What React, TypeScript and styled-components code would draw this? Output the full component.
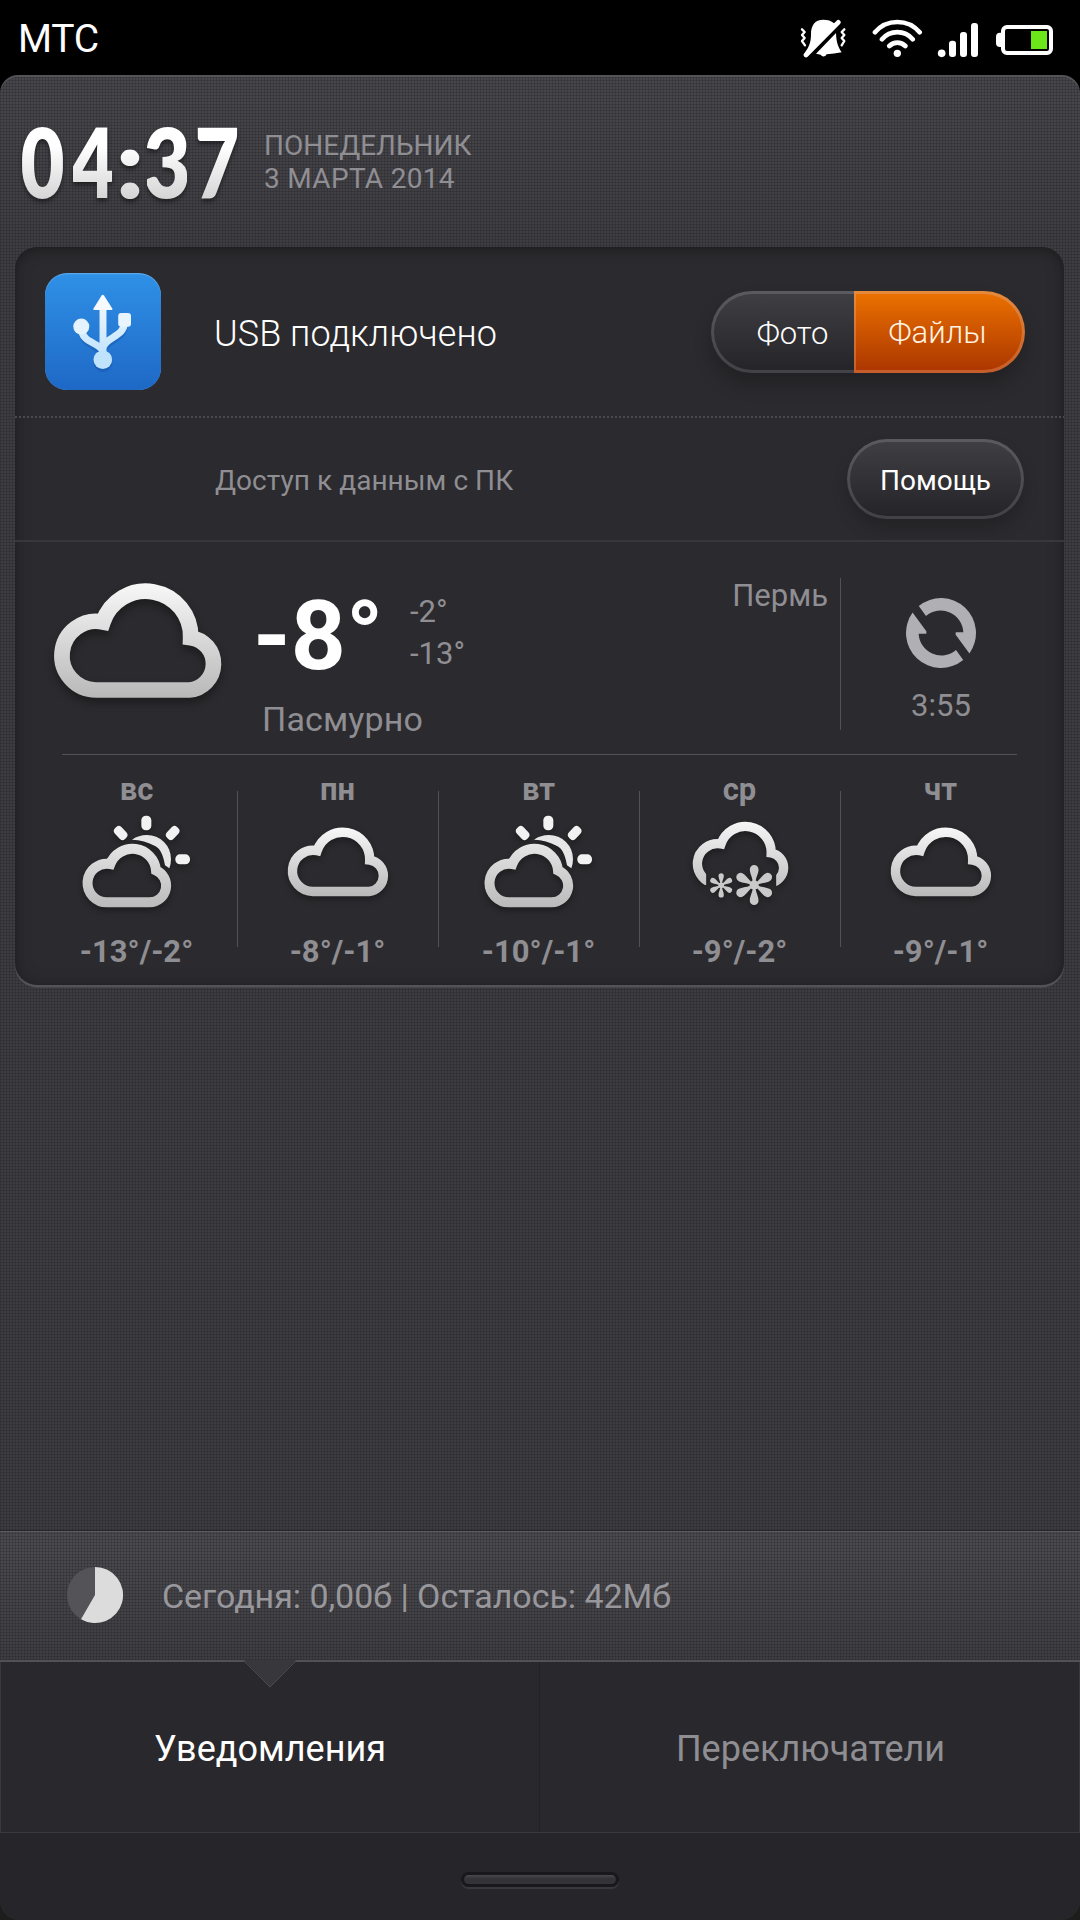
import React from "react";
import styled, { createGlobalStyle } from "styled-components";

const weave = `
  repeating-linear-gradient(0deg, rgba(18, 18, 22, 0.2) 0 1px, transparent 1px 3px),
  repeating-linear-gradient(90deg, rgba(18, 18, 22, 0.2) 0 1px, transparent 1px 3px)`;

const muted = "#8f8e93";

const GlobalStyle = createGlobalStyle`
  * { box-sizing: border-box; }
  body { margin: 0; background: #000; }
`;

const Screen = styled.div`
  width: 1080px;
  height: 1920px;
  display: flex;
  flex-direction: column;
  overflow: hidden;
  background: linear-gradient(#000 50%, #1d1d1b 50%);
  color: #fff;
  font-family: Roboto, "Noto Sans", sans-serif;
  white-space: nowrap;
`;

const StatusBar = styled.header`
  height: 75px;
  flex: none;
  display: flex;
  align-items: center;
  justify-content: space-between;
  padding: 1px 26px 0 18px;
`;

const Carrier = styled.span`
  padding-top: 2px;
  font-size: 39px;
  letter-spacing: -0.2px;
`;

const StatusIcons = styled.div`
  display: flex;
  align-items: center;
`;

const StatusIcon = styled.svg<{ $gap?: number }>`
  height: 40px;
  margin-left: ${(p) => p.$gap ?? 0}px;
  display: block;
`;

const Shade = styled.main`
  flex: 1;
  display: flex;
  flex-direction: column;
  border-radius: 18px 18px 20px 20px;
  overflow: hidden;
  background: ${weave}, linear-gradient(#47464b 0, #3e3d42 170px, #3d3c41 900px, #3d3c41);
  box-shadow: inset 0 2px 0 #545358;
`;

const DateHeader = styled.section`
  height: 172px;
  flex: none;
  display: flex;
  align-items: flex-start;
  padding-left: 17px;
`;

const Clock = styled.div`
  width: 228px;
  display: flex;
  margin-top: 37px;
  font-family: Lato, sans-serif;
  font-weight: 800;
  font-size: 96px;
  line-height: 97px;
  filter: drop-shadow(0 3px 2px rgba(0, 0, 0, 0.45));
`;

const ClockGlyph = styled.span<{ $w: number; $squeeze: number }>`
  width: ${(p) => p.$w}px;
  flex: none;
  display: flex;
  justify-content: center;
  transform: scaleX(${(p) => p.$squeeze});
  background: linear-gradient(#fff 35%, #d6d6d6 88%);
  background-clip: text;
  -webkit-background-clip: text;
  color: transparent;
`;

const DateText = styled.div`
  margin: 54px 0 0 19px;
  display: flex;
  flex-direction: column;
  font-size: 28px;
  line-height: 33px;
  color: ${muted};
`;

const FullDate = styled.span`
  letter-spacing: 0.32px;
`;

const Card = styled.section`
  margin: 0 16px 1px 15px;
  height: 738px;
  flex: none;
  display: flex;
  flex-direction: column;
  border-radius: 22px;
  background: #2b2a2e;
  box-shadow: 0 2.5px 0 #535257, inset 0 3px 10px rgba(0, 0, 0, 0.26), inset 0 0 20px rgba(0, 0, 0, 0.12);
`;

const UsbRow = styled.div`
  height: 169px;
  display: flex;
  align-items: center;
  padding: 0 39px 0 30px;
`;

const AppIcon = styled.svg`
  width: 116px;
  height: 117px;
  display: block;
`;

const UsbTitle = styled.div`
  flex: 1;
  padding: 4px 0 0 53px;
  font-size: 36px;
  font-weight: 300;
  letter-spacing: 0.06px;
`;

const DottedRule = styled.div`
  height: 2px;
  background: repeating-linear-gradient(90deg, #4b4a4f 0 2px, transparent 2px 4px);
`;

const SolidRule = styled.div`
  height: 2px;
  background: #38373b;
`;

const Segmented = styled.div`
  display: flex;
  border-radius: 41px;
  box-shadow: 0 12px 18px rgba(0, 0, 0, 0.22);
`;

const Pill = styled.button`
  font-family: inherit;
  color: #fff;
  height: 82px;
  padding: 0;
  border: 3px solid transparent;
  background: linear-gradient(#3f3e43, #252428) padding-box, linear-gradient(#5b5a5f, #424146) border-box;
`;

const PhotoSegment = styled(Pill)`
  width: 143px;
  padding: 3px 0 0 17px;
  border-right: 0;
  border-radius: 41px 0 0 41px;
  font-size: 31px;
  font-weight: 300;
`;

const FilesSegment = styled(Pill)`
  width: 171px;
  padding: 1px 3px 0 0;
  border-left-width: 2px;
  border-radius: 0 41px 41px 0;
  font-size: 31px;
  font-weight: 300;
  color: #fff3e2;
  background: linear-gradient(#ea7000, #ad3700) padding-box, linear-gradient(#e58a3c, #c55d2a) border-box;
`;

const HelpButton = styled(Pill)`
  width: 177px;
  height: 80px;
  padding-top: 3px;
  border-radius: 40px;
  font-size: 28px;
  box-shadow: 0 10px 16px rgba(0, 0, 0, 0.18);
`;

const AccessRow = styled.div`
  height: 122px;
  display: flex;
  align-items: center;
  justify-content: space-between;
  padding: 0 40px 0 200px;
  font-size: 28px;
  color: ${muted};
`;

const AccessLabel = styled.span`
  padding-top: 3px;
  letter-spacing: 0.05px;
`;

const Weather = styled.div`
  height: 212px;
  display: flex;
  align-items: flex-start;
  padding-left: 35px;
  color: ${muted};
`;

const CurrentIcon = styled.svg`
  width: 177px;
  height: 130px;
  margin-top: 37px;
  filter: drop-shadow(0 5px 4px rgba(0, 0, 0, 0.35));
`;

const Current = styled.div`
  width: 300px;
  padding: 46px 0 0 26px;
`;

const TempLine = styled.div`
  display: flex;
`;

const BigTemp = styled.div`
  width: 157px;
  font-size: 96px;
  line-height: 97px;
  font-weight: 700;
  color: #fff;
`;

const Range = styled.div`
  padding-top: 3px;
  font-size: 31px;
  line-height: 42px;
`;

const Condition = styled.div`
  margin-top: 14px;
  padding-left: 9px;
  font-size: 34px;
  line-height: 40px;
  letter-spacing: 0.15px;
`;

const City = styled.div`
  flex: 1;
  padding: 34px 12px 0 0;
  text-align: right;
  font-size: 31px;
  line-height: 40px;
`;

const Refresh = styled.div`
  width: 224px;
  height: 152px;
  margin-top: 36px;
  border-left: 1px solid #525156;
  display: flex;
  flex-direction: column;
  align-items: center;
  padding: 20px 23px 0 0;
  font-size: 31px;
  line-height: 36px;
`;

const RefreshIcon = styled.svg`
  width: 70px;
  height: 70px;
  flex: none;
  margin-bottom: 20px;
`;

const ThinRule = styled.div`
  height: 1px;
  margin: 0 47px;
  background: #525156;
`;

const Forecast = styled.div`
  display: flex;
  padding: 17px 0 0 22px;
`;

const Day = styled.div<{ $divided: boolean }>`
  width: 201px;
  height: 200px;
  flex: none;
  display: flex;
  flex-direction: column;
  align-items: center;
  padding-right: 2px;
  font-weight: 700;
  font-size: 31px;
  line-height: 36px;
  color: ${muted};
  background: ${(p) => (p.$divided ? "linear-gradient(#525156, #525156) right 19px / 1px 156px no-repeat" : "none")};
`;

const DayIcon = styled.svg`
  width: 140px;
  height: 115px;
  margin-bottom: 11px;
  flex: none;
  filter: drop-shadow(0 3px 3px rgba(0, 0, 0, 0.35));
`;

const Space = styled.div`
  flex: 1;
`;

const Traffic = styled.section`
  height: 131px;
  flex: none;
  display: flex;
  align-items: center;
  padding: 0 0 2px 66px;
  border-top: 1px solid #5a595e;
  border-bottom: 2px solid #525156;
  box-shadow: 0 -1px 0 #29282c;
  background: ${weave}, linear-gradient(#4b4a4f, #3e3d42);
  color: #98979b;
  font-size: 34px;
`;

const Pie = styled.svg`
  width: 58px;
  height: 58px;
  margin-right: 38px;
`;

const TrafficText = styled.span`
  padding-top: 2px;
  letter-spacing: -0.04px;
`;

const Tabs = styled.nav`
  height: 171px;
  flex: none;
  display: grid;
  grid-template-columns: 539px 1fr;
  border: 1px solid #39383c;
  border-top: 0;
  background: #29282c;
`;

const Tab = styled.button<{ $active?: boolean }>`
  position: relative;
  padding: 3px 0 0 ${(p) => (p.$active ? 0 : 2)}px;
  border: 0;
  border-right: ${(p) => (p.$active ? "1px solid #222125" : "0")};
  background: none;
  font-family: inherit;
  font-size: 36px;
  color: ${(p) => (p.$active ? "#fff" : muted)};
`;

const Pointer = styled.svg`
  position: absolute;
  top: -2px;
  left: 243px;
  width: 52px;
  height: 28px;
`;

const Bottom = styled.footer`
  height: 87px;
  flex: none;
  display: flex;
  justify-content: center;
  align-items: flex-start;
  padding-top: 39px;
  background: #26252a;
`;

const Handle = styled.div`
  width: 158px;
  height: 15px;
  border: 3px solid #19181c;
  border-radius: 8px;
  background: linear-gradient(#49484d, #343338 40%, #343338);
  box-shadow: 0 2px 0 #39383c;
`;

const Silver = ({ id, y1, y2 }: { id: string; y1: number; y2: number }) => (
  <linearGradient id={id} gradientUnits="userSpaceOnUse" x1="0" x2="0" y1={y1} y2={y2}>
    <stop offset="0" stopColor="#f8f8f8" />
    <stop offset="1" stopColor="#b8b8b9" />
  </linearGradient>
);

const CLOUD =
  "M287 451 A103 103 0 1 1 308 247 A135 135 0 0 1 571 294 A79 79 0 0 1 567 451 Z";

const PETAL = "M-3 0 C-3 -20 -14 -35 -13 -47 A13 13 0 0 1 13 -47 C14 -35 3 -20 3 0 Z";

const Flake = ({ x, y, scale }: { x: number; y: number; scale: number }) => (
  <g transform={`translate(${x} ${y}) scale(${scale})`} fill="#c9c9ca">
    {[0, 60, 120, 180, 240, 300].map((a) => (
      <path key={a} d={PETAL} transform={`rotate(${a})`} />
    ))}
    <circle r="14" />
  </g>
);

const CloudDay = () => (
  <DayIcon viewBox="803.5 171 420 345">
    <Silver id="cloudDay" y1={130} y2={475} />
    <g transform="translate(766 151) scale(0.6)">
      <path d={CLOUD} fill="none" stroke="url(#cloudDay)" strokeWidth="47" />
    </g>
  </DayIcon>
);

const SunCloudDay = () => (
  <DayIcon viewBox="200 172 420 345">
    <Silver id="sunDay" y1={195} y2={480} />
    <path
      d="M322 455 A58 58 0 1 1 330 340 A71 71 0 0 1 467 359 A50 50 0 0 1 448 455 Z"
      fill="none"
      stroke="url(#sunDay)"
      strokeWidth="30"
    />
    <path
      d="M395 267 Q415 253 440 253 A72 72 0 0 1 512 325 Q512 340 507 353 L494 344 Q485 294 464 286 Q432 268 395 267 Z"
      fill="#e6e6e6"
    />
    <g fill="#f2f2f2">
      <rect x="-15" y="-22" width="30" height="44" rx="14" transform="translate(438 217)" />
      <rect x="-14" y="-22" width="28" height="44" rx="12" transform="translate(361 247) rotate(-42)" />
      <rect x="-14" y="-22" width="28" height="44" rx="12" transform="translate(517 247) rotate(42)" />
      <rect x="-15" y="-22" width="30" height="44" rx="14" transform="translate(547 326) rotate(90)" />
    </g>
  </DayIcon>
);

const SnowDay = () => (
  <DayIcon viewBox="86.5 173 420 345">
    <Silver id="snowDay" y1={205} y2={450} />
    <clipPath id="snowClip">
      <path d="M100 180 H500 V409 H405 V350 H195 V404 H100 Z" />
    </clipPath>
    <path
      clipPath="url(#snowClip)"
      d="M227 400 A60 60 0 1 1 239.5 281 A77.3 77.3 0 0 1 390 308 A45 45 0 0 1 388 397"
      fill="none"
      stroke="url(#snowDay)"
      strokeWidth="28"
    />
    <Flake x={240} y={405} scale={0.61} />
    <Flake x={339} y={404} scale={1} />
  </DayIcon>
);

const days = [
  { name: "вс", icon: <SunCloudDay />, temps: "-13°/-2°" },
  { name: "пн", icon: <CloudDay />, temps: "-8°/-1°" },
  { name: "вт", icon: <SunCloudDay />, temps: "-10°/-1°" },
  { name: "ср", icon: <SnowDay />, temps: "-9°/-2°" },
  { name: "чт", icon: <CloudDay />, temps: "-9°/-1°" },
];

const clockGlyphs = [
  { ch: "0", w: 51, squeeze: 0.8 },
  { ch: "4", w: 49, squeeze: 0.8 },
  { ch: ":", w: 26, squeeze: 1.1 },
  { ch: "3", w: 48, squeeze: 0.85 },
  { ch: "7", w: 52, squeeze: 0.8 },
];

export default function App() {
  return (
    <Screen>
      <GlobalStyle />
      <StatusBar>
        <Carrier>МТС</Carrier>
        <StatusIcons>
          <StatusIcon viewBox="120 54 141 120" width="47">
            <path
              d="M190 59 C164 59 153 77 153 103 C153 128 147 142 133 160 A7 7 0 0 0 143 170 L240 72 A7 7 0 0 0 230 62 L222 70 C214 62 203 59 190 59 Z"
              fill="#fff"
            />
            <path d="M228 99 C229 128 235 142 245 157 Q222 162 200 163 A10 10 0 0 1 182 164 Q175 163 168 161 Z" fill="#fff" />
            <path
              d="M126 88 L134 96 L126 105 L134 114 L126 123 L135 136 M253 88 L245 96 L253 105 L245 114 L253 123 L245 136"
              fill="none"
              stroke="#fff"
              strokeWidth="7"
              strokeLinecap="round"
              strokeLinejoin="round"
            />
          </StatusIcon>
          <StatusIcon viewBox="336 54 153 120" width="51" $gap={25}>
            <circle cx="412" cy="160" r="11" fill="#fff" />
            <path
              d="M345 97 A88 88 0 0 1 479 97 M366 118 A60 60 0 0 1 458 118 M388 138 A34 34 0 0 1 436 138"
              fill="none"
              stroke="#fff"
              strokeWidth="14"
              strokeLinecap="round"
            />
          </StatusIcon>
          <StatusIcon viewBox="531 54 126 120" width="42" $gap={14}>
            <g fill="#fff">
              <circle cx="545" cy="160" r="11.5" />
              <rect x="567" y="122" width="21" height="49" rx="9" />
              <rect x="600" y="96" width="21" height="75" rx="9" />
              <rect x="633" y="69" width="21" height="102" rx="9" />
            </g>
          </StatusIcon>
          <StatusIcon viewBox="705 54 177 120" width="59" $gap={16}>
            <rect x="708" y="98" width="26" height="43" rx="12" fill="#fff" />
            <rect x="729" y="81" width="144" height="78" rx="12" fill="#000" stroke="#fff" strokeWidth="12" />
            <rect x="813" y="93" width="48" height="54" fill="#6be61a" />
          </StatusIcon>
        </StatusIcons>
      </StatusBar>

      <Shade>
        <DateHeader>
          <Clock>
            {clockGlyphs.map((g, i) => (
              <ClockGlyph key={i} $w={g.w} $squeeze={g.squeeze}>
                {g.ch}
              </ClockGlyph>
            ))}
          </Clock>
          <DateText>
            <span>ПОНЕДЕЛЬНИК</span>
            <FullDate>3 МАРТА 2014</FullDate>
          </DateText>
        </DateHeader>

        <Card>
          <UsbRow>
            <AppIcon viewBox="0 0 116 117">
              <linearGradient id="usbBg" x1="0" x2="0" y1="0" y2="1">
                <stop offset="0" stopColor="#2f90e6" />
                <stop offset="1" stopColor="#1e68c6" />
              </linearGradient>
              <linearGradient id="usbFg" gradientUnits="userSpaceOnUse" x1="0" x2="0" y1="22" y2="96">
                <stop offset="0" stopColor="#f8fbfe" />
                <stop offset="1" stopColor="#b5defc" />
              </linearGradient>
              <rect width="116" height="117" rx="22" fill="#5aa8ec" />
              <rect y="1.2" width="116" height="115.8" rx="22" fill="url(#usbBg)" />
              <g transform="translate(0 3)" opacity="0.25" fill="#0b3f8c" stroke="#0b3f8c">
                <path d="M58 30 V84 M37 58 C38 68 54 71 58 78 M79.5 50 C79 64 60 64 58 75" fill="none" strokeWidth="7" />
                <circle cx="58" cy="86.5" r="9" />
              </g>
              <path
                d="M58 30 V84 M36.8 58 C38 69 54 70 58 78 M79.5 50 C79 64 60 64 58 75"
                fill="none"
                stroke="url(#usbFg)"
                strokeWidth="7"
              />
              <path d="M56.6 22.5 Q57.8 21 59 22.5 L67.3 35.5 Q67.8 37 66.5 37 H49.2 Q47.8 37 48.5 35.5 Z" fill="#f6fafe" />
              <circle cx="36.3" cy="53.6" r="8" fill="#e5f3fe" />
              <rect x="73.2" y="40" width="12.8" height="13.8" rx="3" fill="#e9f5fe" />
              <circle cx="57.8" cy="86.7" r="9.3" fill="#c0e3fd" />
            </AppIcon>
            <UsbTitle>USB подключено</UsbTitle>
            <Segmented>
              <PhotoSegment>Фото</PhotoSegment>
              <FilesSegment>Файлы</FilesSegment>
            </Segmented>
          </UsbRow>
          <DottedRule />
          <AccessRow>
            <AccessLabel>Доступ к данным с ПК</AccessLabel>
            <HelpButton>Помощь</HelpButton>
          </AccessRow>
          <SolidRule />
          <Weather>
            <CurrentIcon viewBox="149 118 531 390">
              <Silver id="currentCloud" y1={130} y2={475} />
              <path d={CLOUD} fill="none" stroke="url(#currentCloud)" strokeWidth="47" />
            </CurrentIcon>
            <Current>
              <TempLine>
                <BigTemp>-8°</BigTemp>
                <Range>
                  -2°
                  <br />
                  -13°
                </Range>
              </TempLine>
              <Condition>Пасмурно</Condition>
            </Current>
            <City>Пермь</City>
            <Refresh>
              <RefreshIcon viewBox="678 174 210 210" fill="#b0afb3">
                <path
                  id="arrow"
                  d="M716.3 198 A105 105 0 0 1 868.3 340.3 L827 284 L827 277 L850 277 A68 68 0 0 0 738 228 Z"
                />
                <use href="#arrow" transform="rotate(180 783 279)" />
              </RefreshIcon>
              <span>3:55</span>
            </Refresh>
          </Weather>
          <ThinRule />
          <Forecast>
            {days.map((d, i) => (
              <Day key={d.name} $divided={i < days.length - 1}>
                <span>{d.name}</span>
                {d.icon}
                <span>{d.temps}</span>
              </Day>
            ))}
          </Forecast>
        </Card>

        <Space />

        <Traffic>
          <Pie viewBox="0 0 58 58">
            <circle cx="29" cy="29" r="28" fill="#545358" />
            <path d="M29 29 V1 A28 28 0 1 1 15 53.2 Z" fill="#dcdcdd" />
          </Pie>
          <TrafficText>Сегодня: 0,00б | Осталось: 42Мб</TrafficText>
        </Traffic>
        <Tabs>
          <Tab $active>
            <Pointer viewBox="0 0 52 28">
              <path d="M0 0 H52 L26 27 Z" fill="#38373c" />
              <path d="M0 1 L26 27 L52 1" fill="none" stroke="#4b4a4f" />
            </Pointer>
            Уведомления
          </Tab>
          <Tab>Переключатели</Tab>
        </Tabs>
        <Bottom>
          <Handle />
        </Bottom>
      </Shade>
    </Screen>
  );
}
